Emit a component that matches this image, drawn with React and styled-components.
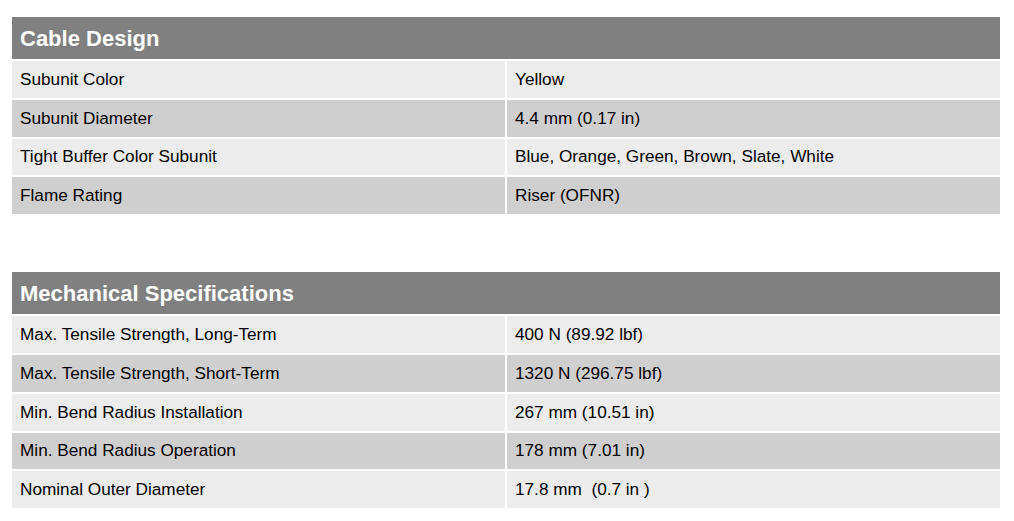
import styled, { createGlobalStyle } from "styled-components";

const GlobalStyle = createGlobalStyle`
  html, body {
    margin: 0;
    padding: 0;
    background: #ffffff;
  }
  body {
    font-family: "Liberation Sans", Arial, sans-serif;
  }
`;

const cableDesign = [
  ["Subunit Color", "Yellow"],
  ["Subunit Diameter", "4.4 mm (0.17 in)"],
  ["Tight Buffer Color Subunit", "Blue, Orange, Green, Brown, Slate, White"],
  ["Flame Rating", "Riser (OFNR)"],
];

const mechanical = [
  ["Max. Tensile Strength, Long-Term", "400 N (89.92 lbf)"],
  ["Max. Tensile Strength, Short-Term", "1320 N (296.75 lbf)"],
  ["Min. Bend Radius Installation", "267 mm (10.51 in)"],
  ["Min. Bend Radius Operation", "178 mm (7.01 in)"],
  ["Nominal Outer Diameter", "17.8 mm\u00a0 (0.7 in )"],
];

const Page = styled.div`
  padding: 17px 14px 0 12px;
  display: flex;
  flex-direction: column;
  gap: 58px;
`;

const Table = styled.div`
  display: flex;
  flex-direction: column;
  gap: 2px;
  width: 988px;
`;

// grey title bar across both columns
const Header = styled.div`
  height: 42px;
  display: flex;
  align-items: center;
  padding-left: 8px;
  padding-top: 1px;
  box-sizing: border-box;
  background: #808080;
  color: #ffffff;
  font-weight: bold;
  font-size: 22px;
`;

const Row = styled.div`
  display: grid;
  grid-template-columns: 493px 493px;
  column-gap: 2px;
  height: 36.8px;
`;

const Cell = styled.div`
  display: flex;
  align-items: center;
  padding-left: 8px;
  background: ${(p) => (p.$dark ? "#d0cfcf" : "#ececec")};
  color: #000000;
  font-size: 17.2px;
  white-space: pre;
`;

function SpecTable({ title, rows }) {
  return (
    <Table>
      <Header>{title}</Header>
      {rows.map(([label, value], i) => (
        <Row key={label}>
          <Cell $dark={i % 2 === 1}>{label}</Cell>
          <Cell $dark={i % 2 === 1}>{value}</Cell>
        </Row>
      ))}
    </Table>
  );
}

export default function App() {
  return (
    <>
      <GlobalStyle />
      <Page>
        <SpecTable title="Cable Design" rows={cableDesign} />
        <SpecTable title="Mechanical Specifications" rows={mechanical} />
      </Page>
    </>
  );
}
